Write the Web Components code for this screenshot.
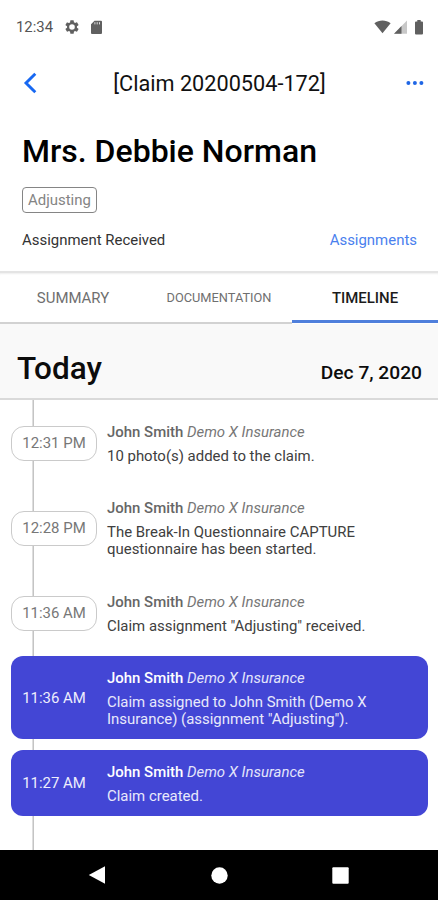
<!DOCTYPE html>
<html lang="en">
<head>
<meta charset="utf-8">
<title>Claim 20200504-172</title>
<style>
  body { margin: 0; background: #fff; font-family: Roboto, "Liberation Sans", sans-serif; font-size: 14.95px; color: #333; }
</style>
</head>
<body>
<claim-screen>
  <status-bar slot="top" time="12:34"></status-bar>
  <title-bar slot="top">[Claim 20200504-172]</title-bar>
  <claim-header slot="top" badge="Adjusting">
    Mrs. Debbie Norman
    <span slot="state">Assignment Received</span>
    <span slot="link">Assignments</span>
  </claim-header>
  <tab-bar slot="top">
    <tab-item>SUMMARY</tab-item>
    <tab-item small>DOCUMENTATION</tab-item>
    <tab-item active>TIMELINE</tab-item>
  </tab-bar>
  <day-header slot="top">Today<span slot="date">Dec 7, 2020</span></day-header>
  <time-line>
    <timeline-entry time="12:31 PM" author="John Smith" company="Demo X Insurance">10 photo(s) added to the claim.</timeline-entry>
    <timeline-entry time="12:28 PM" author="John Smith" company="Demo X Insurance">The Break-In Questionnaire CAPTURE<br>questionnaire has been started.</timeline-entry>
    <timeline-entry time="11:36 AM" author="John Smith" company="Demo X Insurance">Claim assignment "Adjusting" received.</timeline-entry>
    <timeline-entry filled time="11:36 AM" author="John Smith" company="Demo X Insurance">Claim assigned to John Smith (Demo X<br>Insurance) (assignment "Adjusting").</timeline-entry>
    <timeline-entry filled time="11:27 AM" author="John Smith" company="Demo X Insurance">Claim created.</timeline-entry>
  </time-line>
  <nav-bar slot="bottom"></nav-bar>
</claim-screen>
<script>
const define = (name, render) => customElements.define(name, class extends HTMLElement {
  constructor() {
    super();
    this.attachShadow({ mode: 'open' }).innerHTML = render(this);
  }
});

define('claim-screen', () => `
  <style>
    :host { display: flex; flex-direction: column; height: 900px; overflow: hidden; }
    main { flex: 1; min-height: 0; display: flex; }
  </style>
  <slot name="top"></slot><main><slot></slot></main><slot name="bottom"></slot>`);

define('status-bar', el => `
  <style>
    :host { display: flex; align-items: center; height: 54px; box-sizing: border-box; padding: 0 15px 0 16px; color: #555; font-size: 14.9px; flex: none; }
    .gear { margin-left: 11px; }
    .card { margin-left: 10px; }
    .right { margin-left: auto; display: flex; align-items: center; }
    svg { display: block; fill: #606060; }
  </style>
  <span>${el.getAttribute('time')}</span>
  <svg class="gear" width="16" height="16" viewBox="0 0 24 24"><path fill-rule="evenodd" d="M19.4 13a7.6 7.6 0 0 0 0-2l2.2-1.7a.5.5 0 0 0 .1-.6l-2-3.500a.5.5 0 0 0-.6-.2l-2.500 1a7.300 7.300 0 0 0-1.700-1l-.4-2.600a.5.5 0 0 0-.5-.4h-4a.5.5 0 0 0-.5.4L9.100 5.100a7.700 7.700 0 0 0-1.700 1l-2.500-1a.5.5 0 0 0-.6.2l-2 3.500a.5.5 0 0 0 .1.600L4.600 11a8 8 0 0 0 0 2l-2.200 1.700a.5.5 0 0 0-.1.600l2 3.500c.1.200.4.300.6.200l2.500-1a7.300 7.300 0 0 0 1.700 1l.4 2.600c0 .2.200.4.500.4h4c.3 0 .5-.2.500-.4l.4-2.600a7.700 7.700 0 0 0 1.700-1l2.500 1c.2.100.5 0 .6-.2l2-3.500a.5.5 0 0 0-.1-.6zM12 16.200a4.200 4.200 0 1 1 0-8.400 4.200 4.200 0 0 1 0 8.400z"/></svg>
  <svg class="card" width="13" height="15" viewBox="0 0 13 15"><path d="M4.500 .8H11a1 1 0 0 1 1 1V13a1 1 0 0 1-1 1H2a1 1 0 0 1-1-1V4.300z"/><path stroke="#ddd" stroke-width="1" d="M4.900 2.200v2.200M7.200 2.200v2.200M9.500 2.200v2.200"/></svg>
  <div class="right">
    <svg width="17" height="14" viewBox="0 0 17 14"><path d="M.4 3.300C5-.4 12-.4 16.600 3.300L8.500 13.300z"/></svg>
    <svg style="margin-left:3px" width="13" height="14" viewBox="0 0 13 14"><path fill="#c8c8c8" d="M13 .5V13.700H0z"/><path d="M7.500 6.100v7.600H0z"/></svg>
    <svg style="margin-left:8px;margin-right:0" width="8" height="15" viewBox="0 0 8 15"><path d="M2.300 0h3.400v1.500H7a1 1 0 0 1 1 1V13.500a1 1 0 0 1-1 1H1a1 1 0 0 1-1-1V2.500a1 1 0 0 1 1-1h1.300z"/></svg>
  </div>`);

define('title-bar', () => `
  <style>
    :host { display: grid; grid-template-columns: 40px 1fr 40px; align-items: center; height: 58px; padding: 0 13px 0 14px; font-size: 21.700px; color: #111; text-align: center; flex: none; }
    svg { display: block; }
    .more { justify-self: end; }
  </style>
  <svg width="32" height="24" viewBox="0 0 32 24"><path d="M21.300 2.800 12 12l9.300 9.200" fill="none" stroke="#1768f2" stroke-width="2.900"/></svg>
  <span><slot></slot></span>
  <svg class="more" width="19" height="6" viewBox="0 0 19 6" fill="#1f66e5"><circle cx="2.400" cy="3" r="2"/><circle cx="8.900" cy="3" r="2"/><circle cx="15.400" cy="3" r="2"/></svg>`);

define('claim-header', el => `
  <style>
    :host { display: flex; flex-direction: column; align-items: flex-start; height: 159px; box-sizing: border-box; padding: 20px 21px 0 22px; flex: none; }
    h1 { margin: 0; font-size: 32px; line-height: 38px; font-weight: 500; color: #000; }
    .badge { margin-top: 17px; box-sizing: border-box; height: 26px; line-height: 24px; border: 1px solid #858585; border-radius: 4px; padding: 0 5px; color: #848484; }
    .row { align-self: stretch; display: flex; justify-content: space-between; margin-top: 17px; line-height: 20px; }
    .link { color: #4a7fee; }
  </style>
  <h1><slot></slot></h1>
  <div class="badge">${el.getAttribute('badge')}</div>
  <div class="row"><slot name="state"></slot><span class="link"><slot name="link"></slot></span></div>`);

define('tab-bar', () => `
  <style>
    :host { display: flex; height: 53px; box-sizing: border-box; border-top: 2px solid #e4e4e4; box-shadow: inset 0 2px 2px -1px #eee; flex: none; }
  </style>
  <slot></slot>`);

define('tab-item', () => `
  <style>
    :host { flex: 1; display: flex; align-items: center; justify-content: center; box-sizing: border-box; border-bottom: 2px solid #d2d2d2; color: #6f6f6f; }
    :host([small]) { font-size: 12.800px; }
    :host([active]) { border-bottom: 3px solid #4f7fdc; margin-bottom: 1px; color: #1c1c1c; font-weight: 500; padding-top: 2px; }
  </style>
  <slot></slot>`);

define('day-header', () => `
  <style>
    :host { display: flex; justify-content: space-between; align-items: baseline; height: 76px; box-sizing: border-box; padding: 26px 16px 0 17px; background: #f9f9f9; border-bottom: 2px solid #dadada; color: #0c0c0c; font-weight: 500; font-size: 31.500px; line-height: 38px; flex: none; }
    .date { font-size: 19.200px; }
  </style>
  <span><slot></slot></span><span class="date"><slot name="date"></slot></span>`);

define('time-line', () => `
  <style>
    :host { flex: 1; display: flex; flex-direction: column; gap: 10.800px; padding: 10.100px 10.500px 0 11px; background: linear-gradient(90deg, #dedede 1px, #c4c4c4 1px) 32px 0 / 2px 100% no-repeat; }
  </style>
  <slot></slot>`);

define('timeline-entry', el => `
  <style>
    :host { display: flex; align-items: center; box-sizing: border-box; line-height: 17.500px; padding: 13.500px 0 10.500px; border-radius: 12px; color: #404040; }
    .time { width: 86px; height: 35px; box-sizing: border-box; flex: none; display: flex; align-items: center; justify-content: center; border: 1.500px solid #cacaca; border-radius: 13px; background: #fff; color: #777; margin: -1px 0 1px; }
    .body { margin-left: 10px; }
    .who { margin-bottom: 6.500px; color: #777; white-space: nowrap; }
    b { font-weight: 500; color: #666; }
    :host([filled]) { background: #4346d5; color: #e8e9fb; }
    :host([filled]) .time { background: none; border-color: transparent; color: #eeeefc; }
    :host([filled]) .who { color: #e4e5fb; }
    :host([filled]) b { color: #fff; }
  </style>
  <div class="time">${el.getAttribute('time')}</div>
  <div class="body">
    <div class="who"><b>${el.getAttribute('author')}</b> <i>${el.getAttribute('company')}</i></div>
    <slot></slot>
  </div>`);

define('nav-bar', () => `
  <style>
    :host { display: flex; justify-content: space-between; align-items: center; height: 50px; padding: 0 89px 0 88px; background: #000; flex: none; }
    svg { display: block; fill: #fff; }
  </style>
  <svg width="18" height="18" viewBox="0 0 18 18"><path d="M17 .3v17.400L.8 9z"/></svg>
  <svg width="17" height="17" viewBox="0 0 17 17"><circle cx="8.500" cy="8.500" r="8.200"/></svg>
  <svg width="17" height="17" viewBox="0 0 17 17"><rect x=".3" y=".3" width="16.400" height="16.400" rx="1"/></svg>`);
</script>
</body>
</html>
